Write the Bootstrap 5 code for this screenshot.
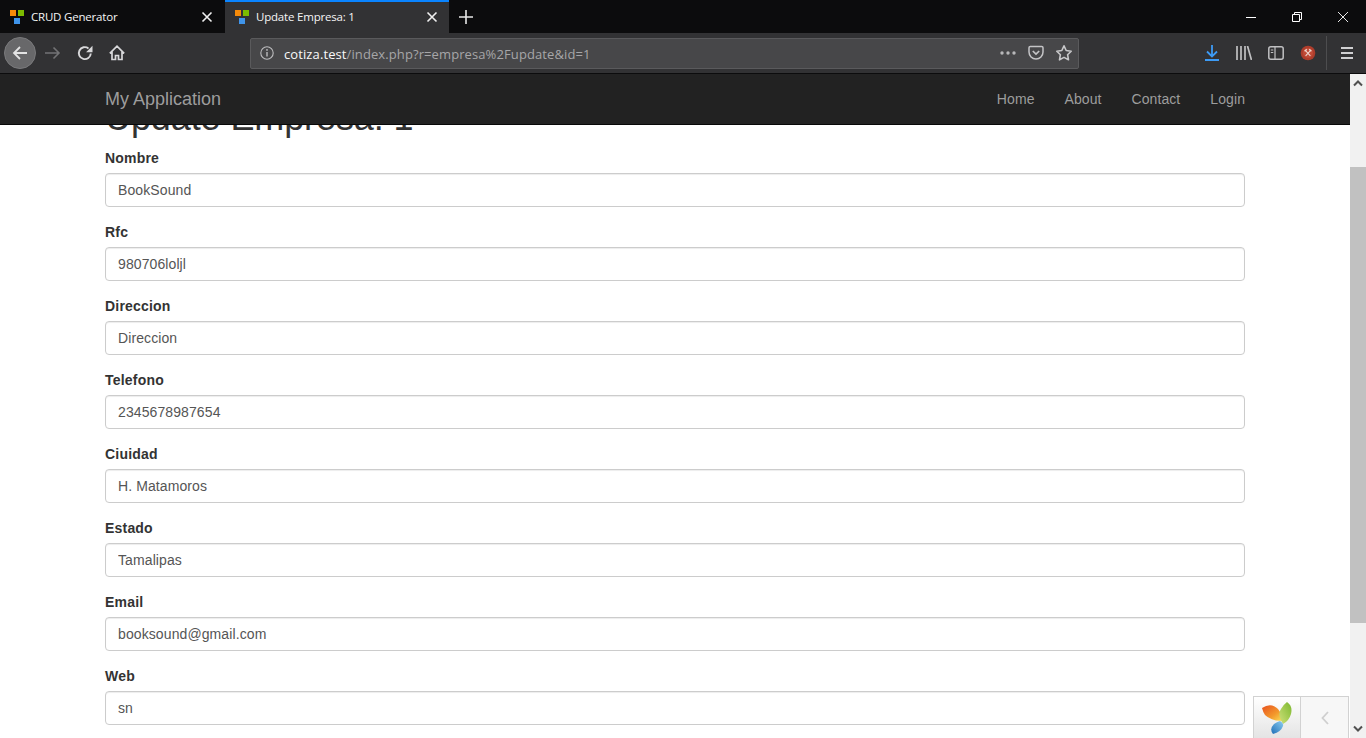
<!DOCTYPE html>
<html lang="es">
<head>
<meta charset="utf-8">
<title>Update Empresa: 1</title>
<link rel="stylesheet" href="https://cdn.jsdelivr.net/npm/bootstrap@5.3.0/dist/css/bootstrap.min.css">
<style>
html,body{height:738px;overflow:hidden;background:#fff}
body{font-family:"Liberation Sans",Arial,sans-serif;font-size:14px;line-height:20px;color:#333}
.ui-font{font-family:"Open Sans","Noto Sans",sans-serif}
.tabstrip{height:33px;background:#0c0c0d;color:#fff;font-size:11.5px;letter-spacing:-.2px}
.tabitem{width:225px;height:33px;padding:1px 12px 0 10px;gap:7px;color:#f5f5f5}
.tabitem.tabon{width:224px;background:#323234;border-top:2px solid #0a84ff;padding:0 11px 1px 10px}
.tabtitle{flex:1 1 auto;white-space:nowrap;line-height:1}
.favic{display:block;flex:none}
.newtab{width:33px}
.winbtns{margin-left:auto;height:33px}
.winbtn{width:46px;height:33px}
.toolstrip{height:41px;background:#323234;border-bottom:1px solid #0c0c0d;color:#d0d0d2}
.tbbtn{width:32px;height:32px;flex:none}
.backbtn{width:32px;height:32px;border-radius:50%;background:#68686a;margin:0 1px 0 4px;border:1px solid #7a7a7c;flex:none}
.urlbar{position:relative;width:829px;height:31px;margin-left:117px;background:#474749;border:1px solid #5a5a5c;border-radius:2px;padding:0 5px 0 9px;font-size:13px;letter-spacing:.1px}
.urlhost{color:#f9f9fa}
.urlpath{color:#a6a6a8}
.urltxt{margin-left:10px;padding-top:1px;white-space:nowrap;flex:1 1 auto}
.urlgap1{margin-left:12px}
.urlgap2{margin-left:11px}
.toolend{margin-left:auto;padding-right:3px}
.sepline{width:1px;height:34px;background:#4d4d4f;margin:0 4px 0 2px}
.viewarea{position:relative;height:664px;overflow:hidden;background:#fff}
.pageflow{width:1350px;height:664px;overflow:hidden;padding-top:24px}
.wrapbox{width:1140px;margin:0 auto}
.pagehead{font-family:"Liberation Sans",Arial,sans-serif;font-size:36px;font-weight:500;line-height:39.6px;margin:0 0 10px;color:#333;letter-spacing:-.1px}
.fieldset{margin-bottom:15px}
.fieldname{display:block;font-weight:700;font-size:14px;line-height:20px;margin:0 0 5px;color:#333;letter-spacing:.2px}
.fieldinput.form-control{height:34px;padding:6px 12px;font-size:14px;line-height:20px;color:#555;border:1px solid #ccc;border-radius:4px;box-shadow:inset 0 1px 1px rgba(0,0,0,.075);font-family:"Liberation Sans",Arial,sans-serif;letter-spacing:.1px}
.topnav.navbar{position:absolute;top:0;left:0;width:1350px;height:51px;padding:0;background:#222;border-bottom:1px solid #080808}
.topnav .wrapbox{display:flex;align-items:center;justify-content:space-between;height:50px}
.topnav .navbar-brand{color:#9d9d9d;font-size:18px;line-height:20px;padding:0;margin:0}
.topnav.navbar-expand .navbar-nav .nav-link{color:#9d9d9d;font-size:14px;line-height:20px;padding:15px;letter-spacing:.08px}
.topnav .navbar-nav{margin-right:-15px}
.scrolltrack{position:absolute;top:0;right:0;width:16px;height:664px;background:#f1f1f1}
.scrollthumb{position:absolute;top:93px;left:0;width:16px;height:456px;background:#c1c1c1}
.scrollarrow{position:absolute;left:3px;display:block}
.arrowup{top:6px}
.arrowdown{bottom:6px}
.debugbar{position:absolute;right:17px;bottom:0;width:96px;height:42px;border:1px solid #d2d2d2;border-bottom:0;background:linear-gradient(#fff,#e4e4e4)}
.debuglogo{width:47px;height:41px;border-right:1px solid #d2d2d2}
.debugtoggle{flex:1 1 auto;background:#f7f7f7}
</style>
</head>
<body>
<div class="tabstrip d-flex align-items-stretch ui-font">
  <div class="tabitem d-flex align-items-center">
    <svg class="favic" width="14" height="14" viewBox="0 0 14 14"><rect x="0" y="0" width="6" height="6" fill="#f48a0a"/><rect x="8" y="0" width="6" height="6" fill="#7cbb00"/><rect x="4" y="8" width="6" height="6" fill="#3f94ea"/></svg>
    <span class="tabtitle">CRUD Generator</span>
    <svg width="12" height="12" viewBox="0 0 12 12"><path d="M1.500 1.500l9 9M10.500 1.500l-9 9" stroke="#f0f0f0" stroke-width="1.600"/></svg>
  </div>
  <div class="tabitem tabon d-flex align-items-center">
    <svg class="favic" width="14" height="14" viewBox="0 0 14 14"><rect x="0" y="0" width="6" height="6" fill="#f48a0a"/><rect x="8" y="0" width="6" height="6" fill="#7cbb00"/><rect x="4" y="8" width="6" height="6" fill="#3f94ea"/></svg>
    <span class="tabtitle">Update Empresa: 1</span>
    <svg width="12" height="12" viewBox="0 0 12 12"><path d="M1.500 1.500l9 9M10.500 1.500l-9 9" stroke="#f0f0f0" stroke-width="1.600"/></svg>
  </div>
  <div class="newtab d-flex align-items-center justify-content-center"><svg width="14" height="14" viewBox="0 0 14 14"><path d="M7 0v14M0 7h14" stroke="#e8e8e8" stroke-width="1.600"/></svg></div>
  <div class="winbtns d-flex">
    <div class="winbtn d-flex align-items-center justify-content-center"><svg width="10" height="10" viewBox="0 0 10 10"><path d="M0 5.500h10" stroke="#fff"/></svg></div>
    <div class="winbtn d-flex align-items-center justify-content-center"><svg width="10" height="10" viewBox="0 0 10 10"><path d="M.5 2.500h7v7h-7zM2.500 2.500v-2h7v7h-2" fill="none" stroke="#fff"/></svg></div>
    <div class="winbtn d-flex align-items-center justify-content-center"><svg width="10" height="10" viewBox="0 0 10 10"><path d="M0 0l10 10M10 0L0 10" stroke="#fff" stroke-width=".9"/></svg></div>
  </div>
</div>
<div class="toolstrip d-flex align-items-center ui-font">
  <div class="backbtn d-flex align-items-center justify-content-center"><svg width="16" height="16" viewBox="0 0 16 16"><path d="M15 8H2M8 2L2 8l6 6" fill="none" stroke="#e4e4e4" stroke-width="1.800"/></svg></div>
  <div class="tbbtn d-flex align-items-center justify-content-center"><svg width="16" height="16" viewBox="0 0 16 16"><path d="M0 8h14M8.500 2.500L14 8l-5.500 5.500" fill="none" stroke="#737375" stroke-width="1.600"/></svg></div>
  <div class="tbbtn d-flex align-items-center justify-content-center"><svg width="16" height="16" viewBox="0 0 16 16"><path d="M13.800 8.500A6 6 0 1 1 11.500 3.400" fill="none" stroke="#d8d8da" stroke-width="1.900"/><path d="M15.500 .8v6.400H9.100z" fill="#d8d8da"/></svg></div>
  <div class="tbbtn d-flex align-items-center justify-content-center"><svg width="16" height="16" viewBox="0 0 16 16"><path d="M.8 8.300L8 1.200 15.200 8.300M3 6.500V14.500h3.500v-4h3v4H13V6.500" fill="none" stroke="#d8d8da" stroke-width="1.700"/></svg></div>
  <div class="urlbar d-flex align-items-center">
    <svg width="14" height="14" viewBox="0 0 14 14"><circle cx="7" cy="7" r="6.200" fill="none" stroke="#bdbdbf" stroke-width="1.100"/><path d="M7 6v4.500" stroke="#bdbdbf" stroke-width="1.400"/><circle cx="7" cy="3.900" r=".9" fill="#bdbdbf"/></svg>
    <span class="urltxt"><span class="urlhost">cotiza.test</span><span class="urlpath">/index.php?r=empresa%2Fupdate&amp;id=1</span></span>
    <svg width="16" height="4" viewBox="0 0 16 4"><circle cx="2" cy="2" r="1.700" fill="#b8b8ba"/><circle cx="8" cy="2" r="1.700" fill="#b8b8ba"/><circle cx="14" cy="2" r="1.700" fill="#b8b8ba"/></svg>
    <svg class="urlgap1" width="16" height="16" viewBox="0 0 16 16"><path d="M1 2.800Q1 1.500 2.300 1.500h11.400Q15 1.500 15 2.800V7a7 7 0 0 1-14 0z" fill="none" stroke="#c4c4c6" stroke-width="1.500"/><path d="M4.800 6l3.200 3 3.200-3" fill="none" stroke="#c4c4c6" stroke-width="1.700"/></svg>
    <svg class="urlgap2" width="18" height="18" viewBox="0 0 18 18"><path d="M9 1.800l2.200 4.700 5 .7-3.600 3.500.9 5.100L9 13.400l-4.500 2.400.9-5.100L1.800 7.200l5-.7z" fill="none" stroke="#c8c8ca" stroke-width="1.600" stroke-linejoin="round"/></svg>
  </div>
  <div class="toolend d-flex align-items-center">
    <div class="tbbtn d-flex align-items-center justify-content-center"><svg width="14" height="16" viewBox="0 0 14 16"><path d="M7 0v11M2 6.500L7 11.500l5-5" fill="none" stroke="#3d9bf5" stroke-width="1.800"/><path d="M0 15h14" stroke="#3d9bf5" stroke-width="2"/></svg></div>
    <div class="tbbtn d-flex align-items-center justify-content-center"><svg width="16" height="14" viewBox="0 0 16 14"><path d="M1 0v14M5 0v14M9 0v14M11.500 0l4 14" fill="none" stroke="#c0c0c2" stroke-width="1.700"/></svg></div>
    <div class="tbbtn d-flex align-items-center justify-content-center"><svg width="16" height="14" viewBox="0 0 16 14"><rect x=".8" y=".8" width="14.400" height="12.400" rx="2" fill="none" stroke="#c0c0c2" stroke-width="1.500"/><path d="M7 1v12M2.800 4h2.500M2.800 6.500h2.500" stroke="#c0c0c2" stroke-width="1.200"/></svg></div>
    <div class="tbbtn d-flex align-items-center justify-content-center"><svg width="16" height="16" viewBox="0 0 16 16"><circle cx="8" cy="8" r="7.300" fill="#ad3d2c"/><circle cx="8" cy="8" r="5" fill="#c04a36"/><path d="M5.800 5.800l4.600 5M10.200 5.800l-4.600 5" stroke="#eed8d0" stroke-width="1.100"/><path d="M4.600 6.200l2.200-2M11.400 6.200l-2.200-2" stroke="#eed8d0" stroke-width="1.500"/></svg></div>
    <div class="sepline"></div>
    <div class="tbbtn d-flex align-items-center justify-content-center"><svg width="14" height="12" viewBox="0 0 14 12"><path d="M1 1h12M1 6h12M1 11h12" stroke="#d0d0d2" stroke-width="1.900"/></svg></div>
  </div>
</div>
<div class="viewarea">
  <div class="pageflow">
    <div class="wrapbox">
      <h1 class="pagehead">Update Empresa: 1</h1>
      <form>
        <div class="fieldset"><label class="fieldname" for="f1">Nombre</label><input id="f1" class="form-control fieldinput" value="BookSound"></div>
        <div class="fieldset"><label class="fieldname" for="f2">Rfc</label><input id="f2" class="form-control fieldinput" value="980706loljl"></div>
        <div class="fieldset"><label class="fieldname" for="f3">Direccion</label><input id="f3" class="form-control fieldinput" value="Direccion"></div>
        <div class="fieldset"><label class="fieldname" for="f4">Telefono</label><input id="f4" class="form-control fieldinput" value="2345678987654"></div>
        <div class="fieldset"><label class="fieldname" for="f5">Ciuidad</label><input id="f5" class="form-control fieldinput" value="H. Matamoros"></div>
        <div class="fieldset"><label class="fieldname" for="f6">Estado</label><input id="f6" class="form-control fieldinput" value="Tamalipas"></div>
        <div class="fieldset"><label class="fieldname" for="f7">Email</label><input id="f7" class="form-control fieldinput" value="booksound@gmail.com"></div>
        <div class="fieldset"><label class="fieldname" for="f8">Web</label><input id="f8" class="form-control fieldinput" value="sn"></div>
      </form>
    </div>
  </div>
  <nav class="topnav navbar navbar-expand navbar-dark">
    <div class="wrapbox">
      <a class="navbar-brand" href="#">My Application</a>
      <ul class="navbar-nav flex-row">
        <li class="nav-item"><a class="nav-link" href="#">Home</a></li>
        <li class="nav-item"><a class="nav-link" href="#">About</a></li>
        <li class="nav-item"><a class="nav-link" href="#">Contact</a></li>
        <li class="nav-item"><a class="nav-link" href="#">Login</a></li>
      </ul>
    </div>
  </nav>
  <div class="scrolltrack">
    <svg class="scrollarrow arrowup" width="10" height="7" viewBox="0 0 10 7"><path d="M1 5.500L5 1.500l4 4" fill="none" stroke="#505050" stroke-width="2"/></svg>
    <div class="scrollthumb"></div>
    <svg class="scrollarrow arrowdown" width="10" height="7" viewBox="0 0 10 7"><path d="M1 1.500l4 4 4-4" fill="none" stroke="#505050" stroke-width="2"/></svg>
  </div>
  <div class="debugbar d-flex">
    <div class="debuglogo d-flex align-items-center justify-content-center">
      <svg width="30" height="32" viewBox="0 0 30 32"><defs><linearGradient id="ya" x1="0" y1="0" x2="1" y2="1"><stop offset="0" stop-color="#e8501f"/><stop offset=".6" stop-color="#f39a2c"/><stop offset="1" stop-color="#f9e25a"/></linearGradient><linearGradient id="yb" x1="1" y1="0" x2="0" y2="1"><stop offset="0" stop-color="#7cb82f"/><stop offset="1" stop-color="#cfe07a"/></linearGradient><linearGradient id="yc" x1="1" y1="0" x2="0" y2="1"><stop offset="0" stop-color="#8ccdf0"/><stop offset="1" stop-color="#1f6fb8"/></linearGradient></defs><path d="M0 6Q9 0 16 7q4 5 5 12Q9 19 3 13 1 10 0 6z" fill="url(#ya)"/><path d="M25 0Q31 4 29 12q-2 7-8 10Q15 12 19 7q2-4 6-7z" fill="url(#yb)"/><path d="M18 19q4 2 3 5-2 6-10 8Q7 27 12 22q3-2 6-3z" fill="url(#yc)"/></svg>
    </div>
    <div class="debugtoggle d-flex align-items-center justify-content-center"><svg width="8" height="14" viewBox="0 0 8 14"><path d="M7 1L1.500 7 7 13" fill="none" stroke="#cfcfcf" stroke-width="1.800"/></svg></div>
  </div>
</div>
<script src="https://cdn.jsdelivr.net/npm/bootstrap@5.3.0/dist/js/bootstrap.bundle.min.js"></script>
</body>
</html>
